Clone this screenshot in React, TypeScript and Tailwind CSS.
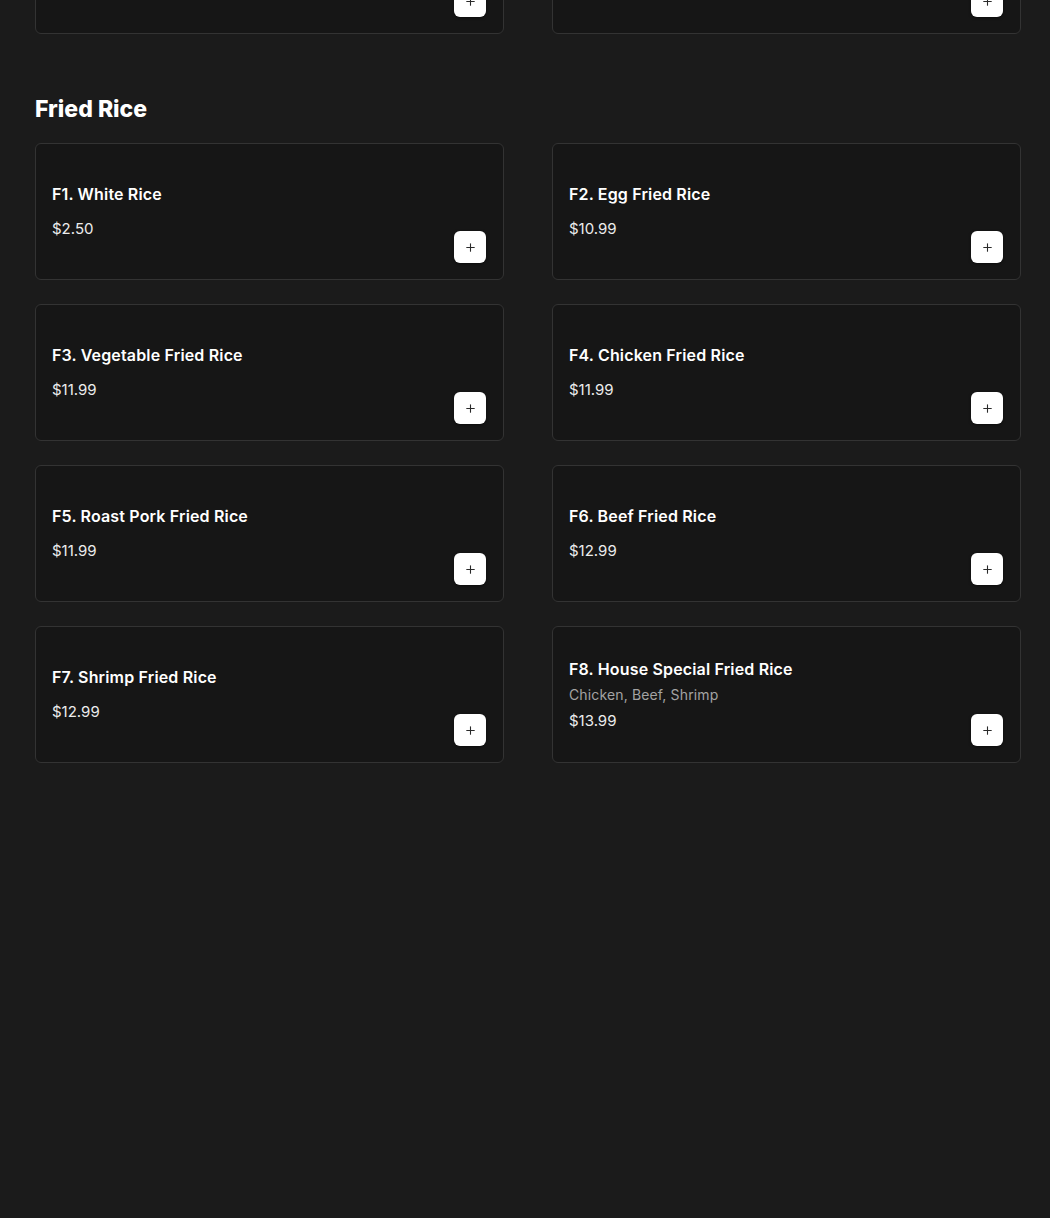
import { Plus } from 'lucide-react'

type Item = { name: string; price: string; desc?: string }

const friedRice: Item[] = [
  { name: 'F1. White Rice', price: '$2.50' },
  { name: 'F2. Egg Fried Rice', price: '$10.99' },
  { name: 'F3. Vegetable Fried Rice', price: '$11.99' },
  { name: 'F4. Chicken Fried Rice', price: '$11.99' },
  { name: 'F5. Roast Pork Fried Rice', price: '$11.99' },
  { name: 'F6. Beef Fried Rice', price: '$12.99' },
  { name: 'F7. Shrimp Fried Rice', price: '$12.99' },
  { name: 'F8. House Special Fried Rice', price: '$13.99', desc: 'Chicken, Beef, Shrimp' },
]

const previous: Item[] = [
  { name: 'E9. House Special Lo Mein', price: '$13.99', desc: 'Chicken, Beef, Shrimp' },
  { name: 'E10. Shrimp Lo Mein', price: '$12.99' },
]

function MenuCard({ item }: { item: Item }) {
  return (
    <div className="h-[137px] rounded-md border border-[#333333] bg-[#161616] pl-4 pr-[17px] pb-4 flex">
      <div className="flex-1 flex flex-col justify-center pt-4">
        <div className="text-[16px] leading-6 font-semibold text-white tracking-[0.01em]">{item.name}</div>
        {item.desc && (
          <div className="mt-1 text-[14px] leading-5 text-[#a3a3a3] tracking-[0.01em]">{item.desc}</div>
        )}
        <div
          className={
            item.desc
              ? 'mt-1 text-[15px] leading-6 text-[#ececec]'
              : 'mt-[11px] text-[15px] leading-6 text-[#ececec]'
          }
        >
          {item.price}
        </div>
      </div>
      <button className="self-end w-8 h-8 rounded-md bg-white flex items-center justify-center shadow-[0_1px_3px_rgba(0,0,0,0.5)]">
        <Plus size={13} strokeWidth={2} className="text-[#2a2a2a]" />
      </button>
    </div>
  )
}

export default function App() {
  return (
    <div
      className="h-[1218px] overflow-hidden bg-[#1b1b1b]"
      style={{ fontFamily: 'Inter, "Open Sans", sans-serif' }}
    >
      <div className="ml-[35px] w-[986px]">
        <div className="-mt-[103px] grid grid-cols-2 gap-x-[48px]">
          {previous.map((it) => (
            <MenuCard key={it.name} item={it} />
          ))}
        </div>

        <h2 className="mt-[59px] mb-[18px] text-[23px] leading-8 font-extrabold text-white">
          Fried Rice
        </h2>

        <div className="grid grid-cols-2 gap-x-[48px] gap-y-[24px]">
          {friedRice.map((it) => (
            <MenuCard key={it.name} item={it} />
          ))}
        </div>
      </div>
    </div>
  )
}
